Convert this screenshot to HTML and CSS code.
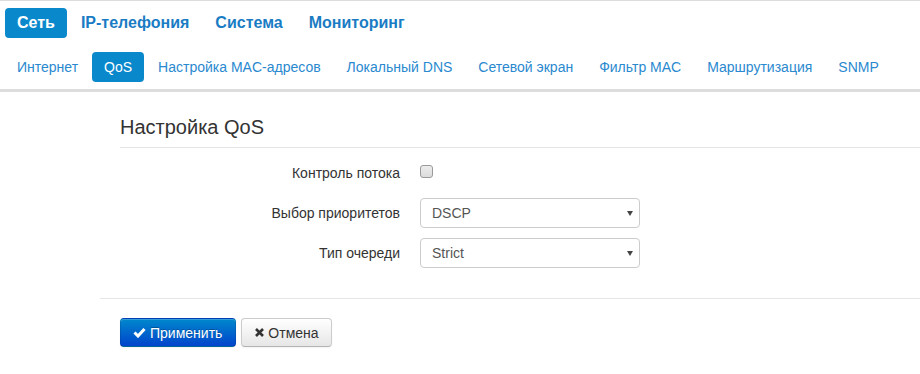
FILE: index.html
```html
<!DOCTYPE html>
<html lang="ru">
<head>
    <meta charset="UTF-8">
    <title>QoS</title>
    <link rel="stylesheet" href="styles.css">
</head>
<body>
    <div class="topbar">
        <ul class="nav nav-main">
            <li class="active"><a href="#">Сеть</a></li>
            <li><a href="#">IP-телефония</a></li>
            <li><a href="#">Система</a></li>
            <li><a href="#">Мониторинг</a></li>
        </ul>
        <ul class="nav nav-sub">
            <li><a href="#">Интернет</a></li>
            <li class="active"><a href="#">QoS</a></li>
            <li><a href="#">Настройка MAC-адресов</a></li>
            <li><a href="#">Локальный DNS</a></li>
            <li><a href="#">Сетевой экран</a></li>
            <li><a href="#">Фильтр MAC</a></li>
            <li><a href="#">Маршрутизация</a></li>
            <li><a href="#">SNMP</a></li>
        </ul>
    </div>

    <div class="main">
        <form class="settings">
            <div class="legend">Настройка QoS</div>

            <div class="form-grid">
                <label class="form-label" for="flowControl">Контроль потока</label>
                <div class="form-control">
                    <input type="checkbox" id="flowControl" class="checkbox">
                </div>

                <label class="form-label" for="priority">Выбор приоритетов</label>
                <div class="form-control select-wrap">
                    <select id="priority">
                        <option>DSCP</option>
                        <option>802.1p</option>
                    </select>
                </div>

                <label class="form-label" for="queueType">Тип очереди</label>
                <div class="form-control select-wrap">
                    <select id="queueType">
                        <option>Strict</option>
                        <option>WRR</option>
                    </select>
                </div>
            </div>

            <div class="form-actions">
                <button type="button" class="btn btn-primary">
                    <svg class="icon" width="13" height="11" viewBox="0 0 13 11">
                        <polyline points="1.5,5.5 5,9 11.5,2" fill="none" stroke="#fff" stroke-width="3"/>
                    </svg>
                    Применить
                </button>
                <button type="button" class="btn">
                    <svg class="icon" width="9" height="9" viewBox="0 0 9 9">
                        <path d="M1 1 L8 8 M8 1 L1 8" stroke="#333" stroke-width="2.6"/>
                    </svg>
                    Отмена
                </button>
            </div>
        </form>
    </div>
</body>
</html>
```

FILE: styles.css
```css
* {
    margin: 0;
    padding: 0;
    box-sizing: border-box;
}

body {
    font-family: "Liberation Sans", Arial, sans-serif;
    font-size: 14px;
    color: #333;
    background: #fff;
    border-top: 1px solid #ddd;
}

.topbar {
    padding: 7px 0 7px 5px;
    border-bottom: 3px solid #ddd;
}

.nav {
    list-style: none;
    display: flex;
}

.nav li {
    margin-right: 2px;
}

.nav a {
    display: block;
    height: 30px;
    line-height: 30px;
    padding: 0 12px;
    border-radius: 4px;
    text-decoration: none;
}

.nav-main a {
    font-size: 16px;
    font-weight: bold;
    color: #1a7cc4;
}

.nav-sub {
    margin-top: 14px;
}

.nav-sub a {
    font-size: 14px;
    color: #2a89cf;
}

.nav .active a {
    background: #0a88cc;
    color: #fff;
}

.main {
    padding: 15px 0 0 100px;
}

.legend {
    margin-left: 20px;
    height: 41px;
    line-height: 40px;
    font-size: 20px;
    color: #333;
    border-bottom: 1px solid #e5e5e5;
}

.form-grid {
    display: grid;
    grid-template-columns: 300px 220px;
    grid-auto-rows: 30px;
    row-gap: 10px;
    column-gap: 20px;
    padding-top: 10px;
}

.form-label {
    text-align: right;
    line-height: 30px;
    font-size: 14px;
    color: #333;
}

.form-control {
    display: flex;
    align-items: center;
}

.checkbox {
    appearance: none;
    width: 13px;
    height: 13px;
    margin-top: -3px;
    border: 1px solid #9a9a9a;
    border-radius: 3px;
    background: linear-gradient(#ececec, #dcdcdc);
}

.select-wrap {
    position: relative;
}

.select-wrap select {
    appearance: none;
    width: 220px;
    height: 30px;
    padding: 0 24px 0 11px;
    border: 1px solid #ccc;
    border-radius: 4px;
    background: #fff;
    font-family: inherit;
    font-size: 14px;
    color: #555;
}

.select-wrap::after {
    content: "";
    position: absolute;
    right: 7px;
    top: 13px;
    border-left: 3px solid transparent;
    border-right: 3px solid transparent;
    border-top: 5px solid #444;
}

.form-actions {
    margin-top: 30px;
    padding: 19px 20px 20px;
    border-top: 1px solid #e5e5e5;
    display: flex;
    gap: 5px;
}

.btn {
    display: inline-flex;
    align-items: center;
    gap: 4px;
    height: 29px;
    padding: 0 12px 0 13px;
    font-family: inherit;
    font-size: 14px;
    color: #333;
    border: 1px solid #ccc;
    border-bottom-color: #b3b3b3;
    border-radius: 4px;
    background: linear-gradient(#fff, #e6e6e6);
    box-shadow: inset 0 1px 0 rgba(255, 255, 255, 0.2), 0 1px 2px rgba(0, 0, 0, 0.05);
    cursor: pointer;
}

.btn-primary {
    padding: 0 13px 0 12px;
    color: #fff;
    background: linear-gradient(#0088cc, #0044cc);
    border-color: rgba(0, 0, 0, 0.1) rgba(0, 0, 0, 0.1) rgba(0, 0, 0, 0.25);
    text-shadow: 0 -1px 0 rgba(0, 0, 0, 0.25);
}

.icon {
    flex: none;
}
```
